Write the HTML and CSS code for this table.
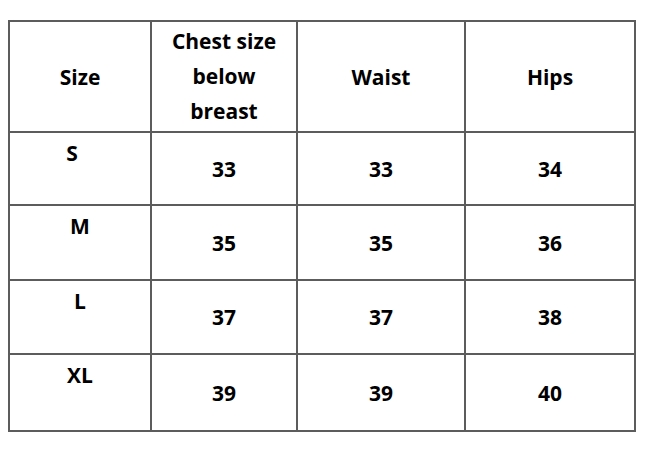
FILE: index.html
```html
<!DOCTYPE html>
<html lang="en">
<head>
<meta charset="utf-8">
<title>Size chart</title>
<link rel="stylesheet" href="styles.css">
</head>
<body>
<table class="chart">
  <colgroup>
    <col class="c1"><col class="c2"><col class="c3"><col class="c4">
  </colgroup>
  <tr class="head">
    <td>Size</td>
    <td class="multi">Chest size<br>below<br>breast</td>
    <td>Waist</td>
    <td>Hips</td>
  </tr>
  <tr class="r1">
    <td class="label label-s">S</td><td>33</td><td>33</td><td>34</td>
  </tr>
  <tr class="r2">
    <td class="label">M</td><td>35</td><td>35</td><td>36</td>
  </tr>
  <tr class="r3">
    <td class="label">L</td><td>37</td><td>37</td><td>38</td>
  </tr>
  <tr class="r4">
    <td class="label">XL</td><td>39</td><td>39</td><td>40</td>
  </tr>
</table>
</body>
</html>
```

FILE: styles.css
```css
html, body {
  margin: 0;
  padding: 0;
  background: #ffffff;
}
body {
  padding: 20px 0 0 8px;
  font-family: "Open Sans", "Liberation Sans", sans-serif;
  font-weight: 700;
  font-size: 21px;
  color: #000;
}
.chart {
  border-collapse: collapse;
  table-layout: fixed;
  width: 626px;
}
.c1 { width: 142px; }
.c2 { width: 146px; }
.c3 { width: 168px; }
.c4 { width: 170px; }
.chart td {
  border: 2px solid #5c5c5c;
  text-align: center;
  vertical-align: middle;
  padding: 0;
  line-height: 24px;
}
.head { height: 111px; }
.head .multi { line-height: 35px; }
.r1 { height: 73px; }
.r2 { height: 75px; }
.r3 { height: 74px; }
.r4 { height: 77px; }
.chart td.label {
  vertical-align: top;
  padding-top: 8px;
}
.chart td.label-s { padding-right: 16px; }
```
